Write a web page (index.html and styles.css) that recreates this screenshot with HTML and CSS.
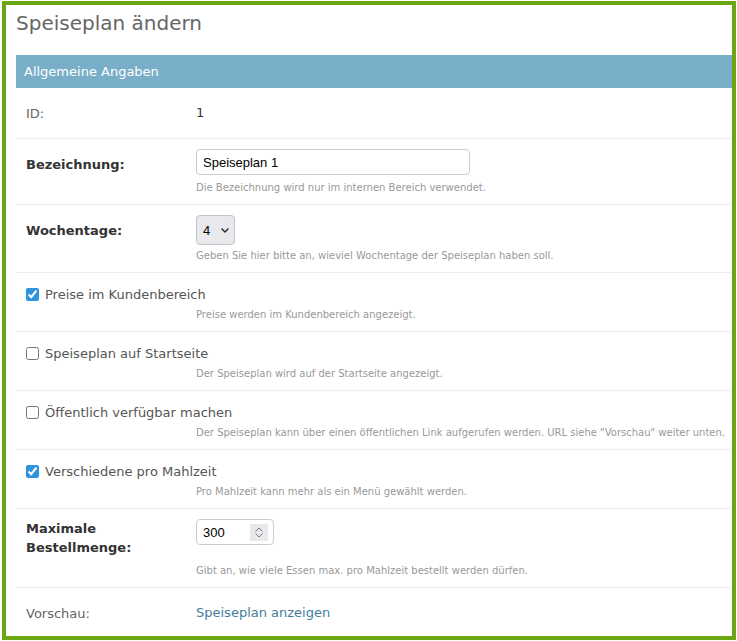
FILE: index.html
```html
<!DOCTYPE html>
<html lang="de">
<head>
    <meta charset="UTF-8">
    <meta name="viewport" content="width=device-width, initial-scale=1.0">
    <title>Speiseplan ändern</title>
    <link rel="stylesheet" href="styles.css">
</head>
<body>
    <div class="frame">
        <div class="content">
            <h1>Speiseplan ändern</h1>

            <form>
                <fieldset class="module aligned">
                    <h2>Allgemeine Angaben</h2>

                    <div class="form-row">
                        <div class="field">
                            <label>ID:</label>
                            <div class="readonly">1</div>
                        </div>
                    </div>

                    <div class="form-row">
                        <div class="field">
                            <label class="required" for="id_name">Bezeichnung:</label>
                            <input type="text" id="id_name" class="vTextField" value="Speiseplan 1">
                        </div>
                        <div class="help">Die Bezeichnung wird nur im internen Bereich verwendet.</div>
                    </div>

                    <div class="form-row">
                        <div class="field">
                            <label class="required" for="id_days">Wochentage:</label>
                            <span class="select-wrap">
                                <select id="id_days">
                                    <option>1</option>
                                    <option>2</option>
                                    <option>3</option>
                                    <option selected>4</option>
                                    <option>5</option>
                                    <option>6</option>
                                    <option>7</option>
                                </select>
                                <svg class="chevron" width="8" height="5" viewBox="0 0 8 5">
                                    <path d="M1 1l3 3 3-3" fill="none" stroke="#222" stroke-width="1.4" stroke-linecap="round" stroke-linejoin="round"/>
                                </svg>
                            </span>
                        </div>
                        <div class="help">Geben Sie hier bitte an, wieviel Wochentage der Speiseplan haben soll.</div>
                    </div>

                    <div class="form-row">
                        <div class="checkbox-row">
                            <input type="checkbox" id="id_prices" checked>
                            <label class="vCheckboxLabel" for="id_prices">Preise im Kundenbereich</label>
                        </div>
                        <div class="help">Preise werden im Kundenbereich angezeigt.</div>
                    </div>

                    <div class="form-row">
                        <div class="checkbox-row">
                            <input type="checkbox" id="id_startpage">
                            <label class="vCheckboxLabel" for="id_startpage">Speiseplan auf Startseite</label>
                        </div>
                        <div class="help">Der Speiseplan wird auf der Startseite angezeigt.</div>
                    </div>

                    <div class="form-row">
                        <div class="checkbox-row">
                            <input type="checkbox" id="id_public">
                            <label class="vCheckboxLabel" for="id_public">Öffentlich verfügbar machen</label>
                        </div>
                        <div class="help">Der Speiseplan kann über einen öffentlichen Link aufgerufen werden. URL siehe "Vorschau" weiter unten.</div>
                    </div>

                    <div class="form-row">
                        <div class="checkbox-row">
                            <input type="checkbox" id="id_multiple" checked>
                            <label class="vCheckboxLabel" for="id_multiple">Verschiedene pro Mahlzeit</label>
                        </div>
                        <div class="help">Pro Mahlzeit kann mehr als ein Menü gewählt werden.</div>
                    </div>

                    <div class="form-row">
                        <div class="field">
                            <label class="required" for="id_max">Maximale Bestellmenge:</label>
                            <span class="number-wrap">
                                <input type="number" id="id_max" class="vIntegerField" value="300">
                                <span class="spinner">
                                    <svg width="18" height="17" viewBox="0 0 18 17">
                                        <path d="M5.5 7.5l3.5-3.5 3.5 3.5M5.5 9.5l3.5 3.5 3.5-3.5" fill="none" stroke="#7a7a7a" stroke-width="1"/>
                                    </svg>
                                </span>
                            </span>
                        </div>
                        <div class="help">Gibt an, wie viele Essen max. pro Mahlzeit bestellt werden dürfen.</div>
                    </div>

                    <div class="form-row last">
                        <div class="field">
                            <label>Vorschau:</label>
                            <div class="readonly"><a href="#">Speiseplan anzeigen</a></div>
                        </div>
                    </div>
                </fieldset>
            </form>
        </div>
    </div>
</body>
</html>
```

FILE: styles.css
```css
body {
    margin: 0;
    font-family: "DejaVu Sans", Verdana, sans-serif;
    font-size: 13px;
    color: #333;
    background-color: white;
}

.frame {
    margin: 1px 0 0 2px;
    width: 734px;
    height: 639px;
    box-sizing: border-box;
    border: 4px solid #6aa613;
    overflow: hidden;
}

.content {
    padding-left: 10px;
}

h1 {
    margin: 6px 0 20px;
    font-size: 20px;
    line-height: 24px;
    font-weight: normal;
    color: #666;
}

fieldset {
    margin: 0;
    padding: 0;
    border: none;
    min-width: 740px;
}

.module h2 {
    margin: 0;
    padding: 8px;
    font-size: 13px;
    line-height: 17px;
    font-weight: normal;
    background-color: #79aec8;
    color: white;
}

.form-row {
    padding: 10px;
    border-bottom: 1px solid #eee;
}

.form-row.last {
    border-bottom: none;
}

.field {
    display: flex;
    align-items: flex-start;
}

.field label {
    display: block;
    flex-shrink: 0;
    width: 160px;
    padding: 3px 10px 1px 0;
    line-height: 1;
    color: #666;
}

.field label::after {
    content: '';
    display: inline-block;
    vertical-align: middle;
    height: 26px;
}

.field label.required {
    font-weight: bold;
    color: #333;
}

.readonly {
    padding-top: 2px;
    line-height: 26px;
    color: #333;
}

.readonly a {
    color: #447e9b;
    text-decoration: none;
}

input[type="text"],
input[type="number"],
select {
    box-sizing: border-box;
    height: 26px;
    margin: 0;
    padding: 5px 6px;
    font-family: "Liberation Sans", Arial, sans-serif;
    font-size: 13px;
    color: black;
    border: 1px solid #ccc;
    border-radius: 4px;
    background-color: white;
}

.vTextField {
    width: 274px;
}

.select-wrap {
    position: relative;
    margin-bottom: 2px;
}

select {
    -webkit-appearance: none;
    appearance: none;
    width: 39px;
    height: 30px;
    padding: 0 6px;
    background-color: #e9e9ed;
    border-color: #c4c4c8;
}

.chevron {
    position: absolute;
    top: 13px;
    right: 6px;
    pointer-events: none;
}

.number-wrap {
    position: relative;
}

.vIntegerField {
    width: 78px;
}

input[type="number"]::-webkit-inner-spin-button,
input[type="number"]::-webkit-outer-spin-button {
    -webkit-appearance: none;
    margin: 0;
}

.spinner {
    position: absolute;
    top: 5px;
    left: 54px;
    width: 18px;
    height: 17px;
    background-color: #e9e9ed;
    pointer-events: none;
}

.spinner svg {
    display: block;
}

.checkbox-row {
    display: flex;
    align-items: center;
    padding-top: 3px;
    padding-bottom: 1px;
    line-height: 17px;
}

.checkbox-row input {
    width: 13px;
    height: 13px;
    margin: 0;
    accent-color: #2f93e0;
}

.vCheckboxLabel {
    margin-left: 6px;
    color: #555;
}

.help {
    margin: 2px 0 0 170px;
    font-size: 10px;
    line-height: 13px;
    color: #999;
}

.checkbox-row + .help {
    margin-top: 4px;
}
```
